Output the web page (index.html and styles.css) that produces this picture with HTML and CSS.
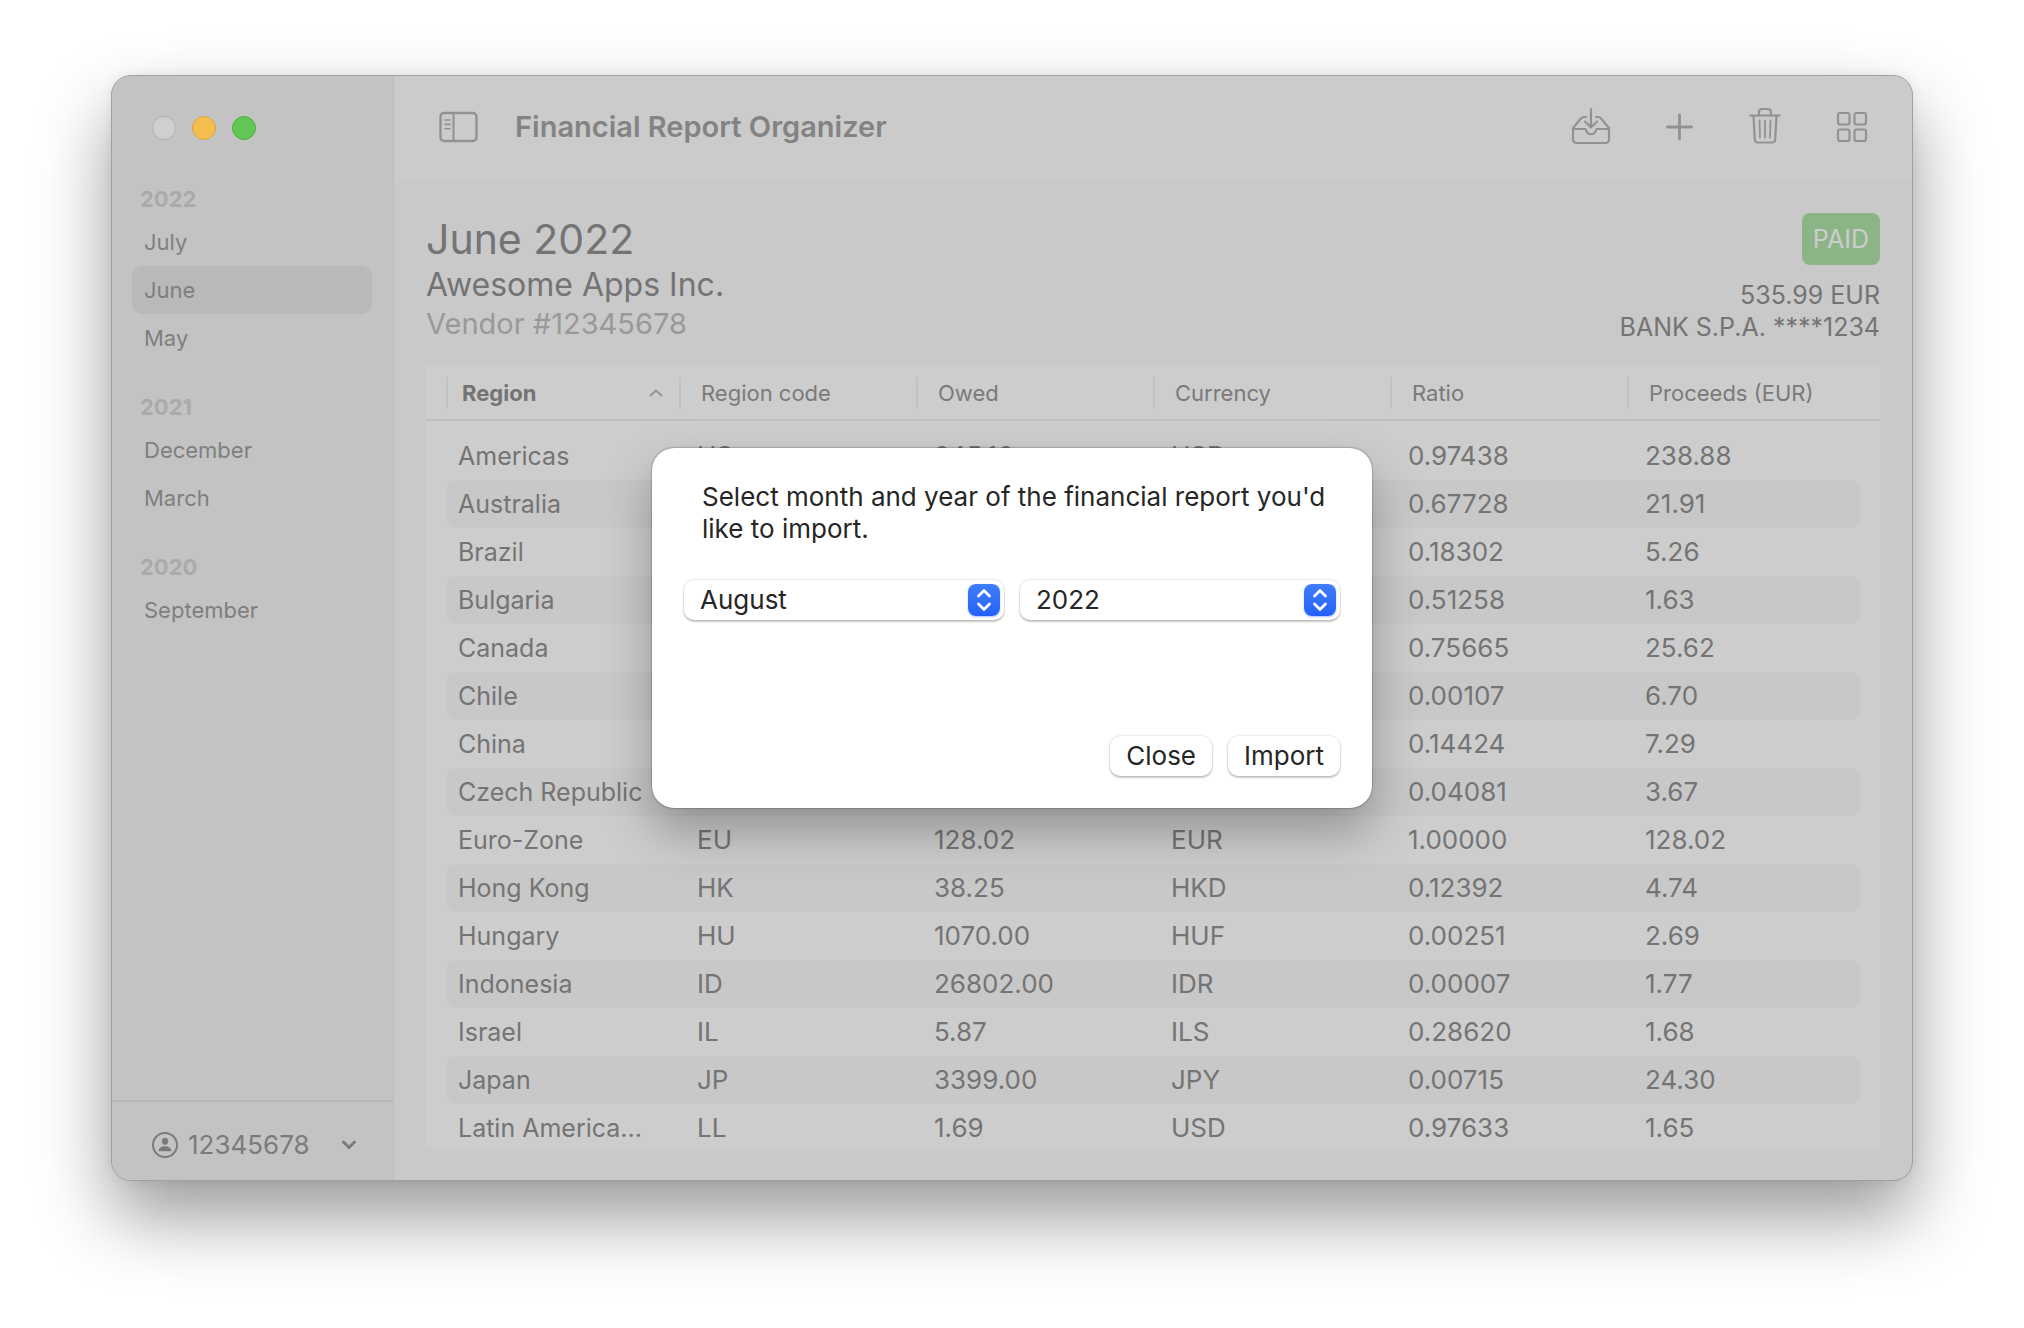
FILE: index.html
```html
<!DOCTYPE html>
<html lang="en">
<head>
<meta charset="utf-8">
<title>Financial Report Organizer</title>
<link rel="stylesheet" href="styles.css">
</head>
<body>
<div class="window">
  <aside class="sidebar">
    <div class="lights">
      <button class="light light-off" aria-label="Close window"></button>
      <button class="light light-yellow" aria-label="Minimize window"></button>
      <button class="light light-green" aria-label="Zoom window"></button>
    </div>
    <nav class="reports">
      <section class="year">
        <h2 class="year-title">2022</h2>
        <a class="month" href="#july">July</a>
        <a class="month month-active" href="#june" aria-current="page">June</a>
        <a class="month" href="#may">May</a>
      </section>
      <section class="year">
        <h2 class="year-title">2021</h2>
        <a class="month" href="#december">December</a>
        <a class="month" href="#march">March</a>
      </section>
      <section class="year">
        <h2 class="year-title">2020</h2>
        <a class="month" href="#september">September</a>
      </section>
    </nav>
    <button class="account">
      <svg width="26" height="26" viewBox="0 0 26 26" fill="none"><circle cx="13" cy="13" r="12" stroke="currentColor" stroke-width="2"/><ellipse cx="13" cy="9.200" rx="3.100" ry="3.500" fill="currentColor"/><path d="M6.600 19.200c0-3.200 3-5 6.400-5s6.400 1.800 6.400 5z" fill="currentColor"/></svg>
      <span class="account-name">12345678</span>
      <svg width="16" height="10" viewBox="0 0 16 10" fill="none" stroke="currentColor" stroke-width="3" stroke-linecap="round" stroke-linejoin="round"><path d="M2.500 2 8 7.500 13.500 2"/></svg>
    </button>
  </aside>

  <main class="main">
    <header class="toolbar">
      <button class="tool" aria-label="Toggle sidebar">
        <svg width="40" height="40" viewBox="0 0 40 40" fill="none" stroke="currentColor"><rect x="1.500" y="6" width="36" height="28" rx="3.500" stroke-width="2.400"/><path d="M14.500 6v28" stroke-width="2"/><path d="M6 13h5M6 17.400h5M6 21.800h5" stroke-width="1.600" stroke-linecap="round"/></svg>
      </button>
      <h1 class="app-title">Financial Report Organizer</h1>
      <div class="tools">
        <button class="tool" aria-label="Import report">
          <svg width="40" height="40" viewBox="0 0 40 40" fill="none" stroke="currentColor" stroke-width="2.200" stroke-linecap="round" stroke-linejoin="round"><path d="M15 10h-2c-1.300 0-2.200.5-3 1.500L2 21v11.500A3.500 3.500 0 0 0 5.500 36h29a3.500 3.500 0 0 0 3.500-3.500V21l-8-9.500c-.8-1-1.700-1.500-3-1.500h-2"/><path d="M2 22h12c.9 0 1 .6 1.300 1.700a4.900 4.900 0 0 0 9.400 0C25 22.600 25.100 22 26 22h12"/><path d="M20 2v18M14 14.500l6 6 6-6"/></svg>
        </button>
        <button class="tool" aria-label="Add">
          <svg width="28" height="40" viewBox="0 0 28 40" stroke="currentColor" stroke-width="2.800" stroke-linecap="round"><path d="M1.500 20h24M13.500 8v24"/></svg>
        </button>
        <button class="tool" aria-label="Delete">
          <svg width="32" height="40" viewBox="0 0 32 40" fill="none" stroke="currentColor" stroke-width="2.200" stroke-linecap="round" stroke-linejoin="round"><path d="M1.500 8.500h29M4.500 8.500l1.300 24c.1 2 1.200 3 3 3h14.400c1.800 0 2.900-1 3-3l1.300-24"/><path d="M10 8.500V5C10 3 11 2 13 2h6c2 0 3 1 3 3v3.500"/><path d="M16 13.500v17M10.500 13.500l.5 17M21.500 13.500l-.5 17" stroke-width="1.800"/></svg>
        </button>
        <button class="tool" aria-label="Grid view">
          <svg width="32" height="40" viewBox="0 0 32 40" fill="none" stroke="currentColor" stroke-width="2.200"><rect x="2" y="6" width="11.500" height="11.500" rx="2"/><rect x="18.500" y="6" width="11.500" height="11.500" rx="2"/><rect x="2" y="22.500" width="11.500" height="11.500" rx="2"/><rect x="18.500" y="22.500" width="11.500" height="11.500" rx="2"/></svg>
        </button>
      </div>
    </header>

    <div class="content">
      <div class="summary">
        <div class="summary-left">
          <h2 class="report-title">June 2022</h2>
          <p class="company">Awesome Apps Inc.</p>
          <p class="vendor">Vendor #12345678</p>
        </div>
        <div class="summary-right">
          <span class="badge">PAID</span>
          <p class="payment">535.99 EUR<br>BANK S.P.A. ****1234</p>
        </div>
      </div>

      <div class="panel">
        <table class="report">
          <colgroup><col class="col-edge"><col><col><col><col><col class="col-edge"></colgroup>
          <thead>
            <tr>
              <th class="sorted" aria-sort="ascending"><span class="sort-label">Region<svg class="sort-arrow" width="14" height="8" viewBox="0 0 14 8" fill="none" stroke="currentColor" stroke-width="2" stroke-linecap="round" stroke-linejoin="round"><path d="M1.500 6.500 7 1.500l5.500 5"/></svg></span></th>
              <th>Region code</th><th>Owed</th><th>Currency</th><th>Ratio</th><th>Proceeds (EUR)</th>
            </tr>
          </thead>
          <tbody>
            <tr><td>Americas</td><td>US</td><td>245.16</td><td>USD</td><td>0.97438</td><td>238.88</td></tr>
            <tr><td>Australia</td><td>AU</td><td>32.35</td><td>AUD</td><td>0.67728</td><td>21.91</td></tr>
            <tr><td>Brazil</td><td>BR</td><td>28.74</td><td>BRL</td><td>0.18302</td><td>5.26</td></tr>
            <tr><td>Bulgaria</td><td>BG</td><td>3.18</td><td>BGN</td><td>0.51258</td><td>1.63</td></tr>
            <tr><td>Canada</td><td>CA</td><td>33.86</td><td>CAD</td><td>0.75665</td><td>25.62</td></tr>
            <tr><td>Chile</td><td>CL</td><td>6262.00</td><td>CLP</td><td>0.00107</td><td>6.70</td></tr>
            <tr><td>China</td><td>CN</td><td>50.54</td><td>CNY</td><td>0.14424</td><td>7.29</td></tr>
            <tr><td>Czech Republic</td><td>CZ</td><td>89.93</td><td>CZK</td><td>0.04081</td><td>3.67</td></tr>
            <tr><td>Euro-Zone</td><td>EU</td><td>128.02</td><td>EUR</td><td>1.00000</td><td>128.02</td></tr>
            <tr><td>Hong Kong</td><td>HK</td><td>38.25</td><td>HKD</td><td>0.12392</td><td>4.74</td></tr>
            <tr><td>Hungary</td><td>HU</td><td>1070.00</td><td>HUF</td><td>0.00251</td><td>2.69</td></tr>
            <tr><td>Indonesia</td><td>ID</td><td>26802.00</td><td>IDR</td><td>0.00007</td><td>1.77</td></tr>
            <tr><td>Israel</td><td>IL</td><td>5.87</td><td>ILS</td><td>0.28620</td><td>1.68</td></tr>
            <tr><td>Japan</td><td>JP</td><td>3399.00</td><td>JPY</td><td>0.00715</td><td>24.30</td></tr>
            <tr><td>Latin America...</td><td>LL</td><td>1.69</td><td>USD</td><td>0.97633</td><td>1.65</td></tr>
          </tbody>
        </table>
      </div>
    </div>
  </main>

  <div class="overlay">
    <form class="dialog" role="dialog" aria-labelledby="dialog-text">
      <p class="dialog-text" id="dialog-text">Select month and year of the financial report you'd like to import.</p>
      <div class="pickers">
        <div class="picker">
          <select class="picker-select" aria-label="Month"><option>August</option><option>July</option><option>June</option></select>
          <span class="picker-knob"><svg width="16" height="24" viewBox="0 0 16 24" fill="none" stroke="currentColor" stroke-width="2.800" stroke-linecap="round" stroke-linejoin="round"><path d="M2.500 8 8 2.500 13.500 8M2.500 16 8 21.500 13.500 16"/></svg></span>
        </div>
        <div class="picker">
          <select class="picker-select" aria-label="Year"><option>2022</option><option>2021</option><option>2020</option></select>
          <span class="picker-knob"><svg width="16" height="24" viewBox="0 0 16 24" fill="none" stroke="currentColor" stroke-width="2.800" stroke-linecap="round" stroke-linejoin="round"><path d="M2.500 8 8 2.500 13.500 8M2.500 16 8 21.500 13.500 16"/></svg></span>
        </div>
      </div>
      <div class="actions">
        <button class="push" type="button">Close</button>
        <button class="push" type="button">Import</button>
      </div>
    </form>
  </div>
</div>
</body>
</html>
```
FILE: styles.css
```css
* {
  box-sizing: border-box;
}

body {
  display: flex;
  height: 100vh;
  margin: 0;
  padding: 75px 111px 147px;
  background: #fff;
  color: #747474;
  font: 26px/32px Inter, "Liberation Sans", sans-serif;
}

h1, h2, p {
  margin: 0;
  font-weight: 400;
}

button, select {
  margin: 0;
  padding: 0;
  border: 0;
  background: none;
  color: inherit;
  font: inherit;
}

svg {
  display: block;
  flex: none;
}

.window {
  position: relative;
  display: flex;
  flex: 1;
  min-width: 0;
  border: 1px solid #a0a0a0;
  border-radius: 20px;
  background: #c9c9c9;
  overflow: hidden;
  box-shadow: 0 36px 72px rgba(0, 0, 0, 0.4), 0 0 12px rgba(0, 0, 0, 0.06);
}

/* Sidebar */

.sidebar {
  display: flex;
  flex-direction: column;
  flex: none;
  width: 282px;
  border-right: 1px solid #bdbdbd;
  background: #c3c3c3;
}

.lights {
  display: flex;
  align-items: center;
  gap: 16px;
  height: 104px;
  padding-left: 40px;
}

.light {
  width: 24px;
  height: 24px;
  border: 1px solid #b0b0b0;
  border-radius: 50%;
  background: #cfcfcf;
}

.light-yellow {
  border-color: #dda33c;
  background: #f5bf4f;
}

.light-green {
  border-color: #4fae41;
  background: #62c655;
}

.reports {
  display: flex;
  flex-direction: column;
  flex: 1;
  gap: 26px;
  padding: 0 21px 0 20px;
  font-size: 22px;
}

.year-title {
  padding-left: 8px;
  color: #aaa;
  font-size: 22px;
  font-weight: 700;
  line-height: 38px;
}

.month {
  display: block;
  padding-left: 12px;
  border-radius: 10px;
  color: #7f7f7f;
  line-height: 48px;
  text-decoration: none;
}

.month-active {
  background: #b9b9b9;
}

.account {
  display: flex;
  align-items: center;
  gap: 10px;
  height: 80px;
  padding: 8px 36px 0 40px;
  border-top: 2px solid #b9b9b9;
  color: #7b7b7b;
  text-align: left;
}

.account-name {
  flex: 1;
}

/* Toolbar */

.main {
  display: flex;
  flex-direction: column;
  flex: 1;
  min-width: 0;
}

.toolbar {
  display: flex;
  align-items: center;
  gap: 36px;
  height: 104px;
  padding: 0 44px 2px 45px;
  background: #cbcbcb;
  color: #929292;
}

.app-title {
  flex: 1;
  color: #838383;
  font-size: 29px;
  font-weight: 600;
}

.tools {
  display: flex;
  gap: 55px;
}

/* Report */

.content {
  display: flex;
  flex-direction: column;
  flex: 1;
  gap: 22px;
  min-height: 0;
  padding: 33px 32px 32px;
}

.summary {
  display: flex;
  justify-content: space-between;
}

.report-title {
  font-size: 41px;
  line-height: 52px;
}

.company {
  font-size: 32px;
  line-height: 40px;
}

.vendor {
  color: #999;
  font-size: 29px;
  line-height: 38px;
}

.summary-right {
  display: flex;
  flex-direction: column;
  align-items: flex-end;
  gap: 14px;
  font-size: 25px;
  text-align: right;
}

.badge {
  padding: 10px 11px;
  border-radius: 8px;
  background: #8bb587;
  color: #cdcdcd;
}

.panel {
  flex: 1;
  min-height: 0;
  padding: 0 20px;
  background: linear-gradient(#bfbfbf, #bfbfbf) 0 54px / 100% 2px no-repeat #cdcdcd;
  overflow: hidden;
}

.report {
  width: 100%;
  border-spacing: 0;
  table-layout: fixed;
}

.col-edge {
  width: 233px;
}

.report th {
  height: 67px;
  padding: 12px 0 23px;
  color: #7a7a7a;
  font-size: 22px;
  font-weight: 400;
  text-align: left;
}

.report th::before {
  content: "";
  float: left;
  width: 2px;
  height: 32px;
  margin-right: 20px;
  background: #c1c1c1;
}

.report th.sorted {
  color: #747474;
  font-weight: 700;
}

.report th.sorted::before {
  margin-right: 14px;
}

.sort-label {
  display: flex;
  align-items: center;
  justify-content: space-between;
  padding-right: 16px;
}

.sort-arrow {
  color: #949494;
}

.report td {
  height: 48px;
  padding: 0 0 0 18px;
}

.report td:first-child {
  padding-left: 12px;
  border-radius: 10px 0 0 10px;
  font-size: 25px;
  white-space: nowrap;
}

.report td:last-child {
  border-radius: 0 10px 10px 0;
}

.report tbody tr:nth-child(even) td {
  background: #c8c8c8;
}

/* Import dialog */

.overlay {
  position: absolute;
  inset: 0;
  display: flex;
  align-items: center;
  justify-content: center;
}

.dialog {
  display: flex;
  flex-direction: column;
  width: 720px;
  min-height: 360px;
  padding: 33px 32px 32px;
  border-radius: 22px;
  background: #fff;
  color: #262626;
  box-shadow: 0 0 2px rgba(0, 0, 0, 0.6), 0 24px 48px rgba(0, 0, 0, 0.28);
}

.dialog-text {
  padding-left: 18px;
}

.pickers {
  display: grid;
  grid-template-columns: 1fr 1fr;
  gap: 16px;
  margin-top: 35px;
}

.picker {
  position: relative;
}

.picker-select {
  display: block;
  width: 100%;
  height: 40px;
  padding: 0 16px;
  border-radius: 10px;
  background: #fff;
  appearance: none;
  box-shadow: 0 0 2px rgba(0, 0, 0, 0.25), 0 2px 2px rgba(0, 0, 0, 0.2);
}

.picker-knob {
  position: absolute;
  top: 4px;
  right: 4px;
  display: flex;
  align-items: center;
  justify-content: center;
  width: 32px;
  height: 32px;
  border-radius: 8px;
  background: linear-gradient(#417ef8, #2460f6);
  color: #fff;
  pointer-events: none;
  box-shadow: 0 1px 2px rgba(36, 96, 246, 0.4);
}

.actions {
  display: flex;
  justify-content: flex-end;
  gap: 16px;
  margin-top: auto;
}

.push {
  height: 40px;
  padding: 0 16px;
  border-radius: 10px;
  background: #fff;
  box-shadow: 0 0 2px rgba(0, 0, 0, 0.25), 0 2px 2px rgba(0, 0, 0, 0.2);
}
```
